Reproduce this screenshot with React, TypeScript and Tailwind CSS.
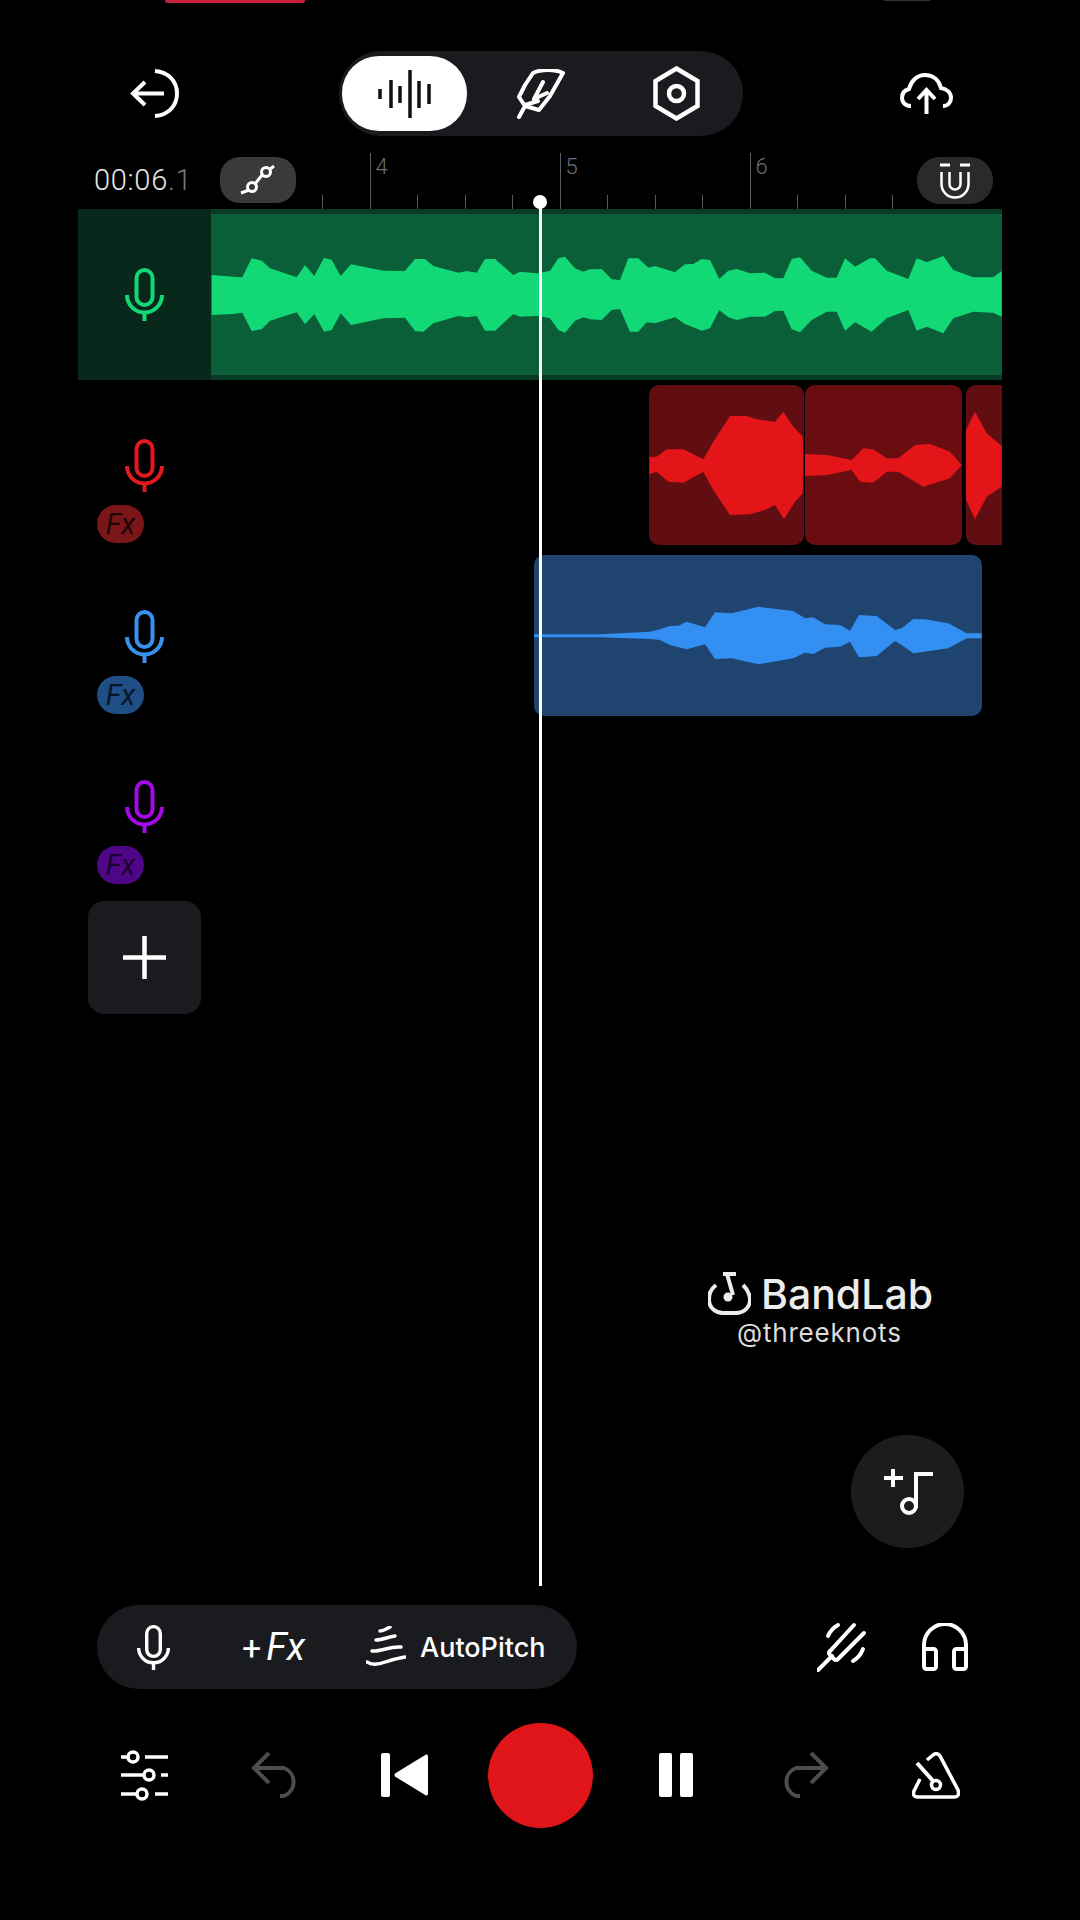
type Pt = [number, number];

const place = (pts: Pt[], ox: number, oy: number) =>
  pts.map(([x, y]) => `${(ox + x / 3).toFixed(1)},${(oy + y / 3).toFixed(1)}`).join(' ');

// waveform outlines, traced by eye
const greenA: Pt[] = [[425,225],[490,230],[517,232],[545,175],[575,182],[600,205],[680,232],[705,195],[733,228],[762,173],[785,180],[812,228],[843,193],[940,212],[1005,213],[1035,177],[1065,177],[1090,198],[1165,218],[1190,213],[1220,218],[1245,177],[1275,177],[1330,225],[1350,215],[1400,220]];
const greenB: Pt[] = [[55,220],[90,212],[115,175],[135,170],[165,205],[190,215],[210,208],[245,207],[275,238],[300,240],[325,175],[355,175],[385,203],[405,198],[465,217],[495,193],[520,192],[545,177],[570,180],[598,237],[625,212],[650,207],[690,220],[735,218],[765,235],[790,235],[815,177],[840,172],[875,212],[920,233],[950,233],[975,175],[1005,200],[1050,175],[1065,175],[1100,212],[1165,237],[1190,175],[1220,187],[1270,168],[1300,210],[1360,232],[1420,232],[1445,213],
  [1445,350],[1420,338],[1360,335],[1300,355],[1270,400],[1220,380],[1190,392],[1165,330],[1100,355],[1055,395],[1005,367],[975,392],[950,335],[920,335],[875,360],[840,397],[815,388],[790,332],[765,333],[735,350],[690,350],[650,360],[625,352],[598,330],[570,385],[545,392],[495,372],[465,352],[405,370],[380,367],[355,395],[330,395],[300,327],[275,330],[245,360],[210,358],[190,352],[165,362],[135,398],[115,390],[90,355],[55,348]];
const greenC: Pt[] = [[1400,348],[1350,350],[1330,342],[1275,392],[1245,392],[1220,348],[1190,352],[1165,348],[1090,370],[1060,395],[1035,393],[1005,353],[940,355],[843,375],[812,340],[785,390],[762,395],[733,342],[705,373],[680,337],[600,362],[575,388],[545,393],[517,338],[490,342],[425,345]];

const red1: Pt[] = [[388,772],[410,770],[440,748],[490,748],[550,778],[580,725],[630,648],[680,648],[710,658],[765,665],[790,635],[820,680],[848,710],[850,795],[848,880],[825,905],[792,958],[765,915],[735,930],[690,943],[630,945],[580,870],[550,815],[490,848],[445,845],[410,815],[388,823]];
const red2: Pt[] = [[855,762],[920,765],[995,780],[1030,745],[1060,748],[1100,775],[1135,775],[1185,735],[1230,732],[1290,755],[1325,795],[1290,835],[1210,860],[1135,815],[1100,815],[1060,848],[1020,845],[995,810],[920,825],[855,828]];
const red3: Pt[] = [[1338,690],[1365,635],[1400,700],[1445,738],[1445,860],[1400,890],[1365,958],[1338,900]];
const blue: Pt[] = [[42,283],[240,283],[390,275],[420,268],[450,258],[475,257],[500,245],[555,262],[585,217],[635,220],[715,200],[820,213],[855,235],[880,232],[915,253],[960,255],[990,272],[1017,225],[1070,228],[1125,270],[1145,265],[1180,237],[1215,238],[1285,250],[1340,280],[1385,280],[1385,295],[1340,295],[1285,325],[1180,340],[1145,315],[1125,303],[1070,348],[1017,352],[990,305],[960,320],[915,323],[880,342],[855,338],[820,355],[715,373],[635,355],[585,357],[555,313],[500,328],[450,315],[420,300],[390,297],[240,292],[42,292]];

function Mic({ className }: { className: string }) {
  return (
    <svg viewBox="0 0 39 53" className={`w-[39px] h-[53px] ${className}`} fill="none" stroke="currentColor" strokeWidth="4">
      <rect x="11.5" y="2" width="16" height="35" rx="8" />
      <path d="M2 27a17.5 17.5 0 0 0 35 0" />
      <path d="M19.5 45v8" />
    </svg>
  );
}

function Fx({ className }: { className: string }) {
  return (
    <div className={`w-[47px] h-[38px] ml-[19px] mt-[13px] rounded-[19px] flex items-center justify-center text-[29px] italic leading-none font-['Roboto',sans-serif] ${className}`}>
      Fx
    </div>
  );
}

function TrackHead({ mic, fx }: { mic: string; fx: string }) {
  return (
    <div className="w-[133px] shrink-0 flex flex-col">
      <Mic className={`ml-[47px] ${mic}`} />
      <Fx className={fx} />
    </div>
  );
}

function Tick({ label }: { label?: string }) {
  if (label) {
    return (
      <div className="w-[47.5px] h-[56px] border-l border-[#5c5c60] pl-[5px] pt-[3px] text-[22px] leading-none text-[#6d6d78] font-['Roboto',sans-serif] font-light">
        {label}
      </div>
    );
  }
  return <div className="w-[47.5px] h-[14px] border-l border-[#58585c]" />;
}

export default function App() {
  return (
    <div className="relative w-[1080px] h-[1920px] bg-black overflow-hidden flex flex-col font-['Roboto',sans-serif] text-white">
      {/* cut off bits of the status bar */}
      <div className="h-[3px] flex">
        <div className="ml-[165px] w-[140px] bg-[#c8203f] rounded-b-[3px]" />
        <div className="ml-[579px] w-[46px] h-[1px] bg-[#333]" />
      </div>

      {/* top bar */}
      <div className="mt-[48px] h-[85px] flex items-center">
        <svg viewBox="0 0 50 50" className="ml-[130px] w-[50px] h-[50px] text-white" fill="none" stroke="currentColor" strokeWidth="4">
          <path d="M25 2C38 3 47 12 47 24.5C47 37 38 46 25 47" />
          <path d="M4 24.5H34M15 13L3 24.5L15 36" />
        </svg>
        <div className="ml-[159px] w-[404px] h-[85px] rounded-[42px] bg-[#1a1b1e] flex items-center">
          <div className="ml-[3px] w-[125px] h-[75px] rounded-[37px] bg-white flex items-center justify-center">
            <svg viewBox="0 0 60 50" className="w-[60px] h-[50px]" fill="none" stroke="#111" strokeWidth="3.5">
              <path d="M5 20v10M16 11v28M25 17v17M35 1v48M44 12v27M54 15v20" />
            </svg>
          </div>
          <svg viewBox="0 0 48 50" className="ml-[50px] w-[48px] h-[50px]" fill="none" stroke="white" strokeWidth="4" strokeLinejoin="round" strokeLinecap="round">
            <path d="M46 4C38 0 24 0 16 4L8 16L2 28L8 37L22 41L33 27Z" />
            <path d="M2 48L8 37M26 13L17 30L30 24M8 36L21 32" />
          </svg>
          <svg viewBox="0 0 47 55" className="ml-[88px] w-[47px] h-[55px]" fill="none" stroke="white" strokeWidth="4.5">
            <path d="M23.5 2.5L44.5 15V40L23.5 52.5L2.5 40V15Z" />
            <circle cx="23.5" cy="27.5" r="7.5" />
          </svg>
        </div>
        <svg viewBox="0 0 53 41" className="ml-[157px] w-[53px] h-[41px]" fill="none" stroke="white" strokeWidth="4">
          <path d="M11 33C5 33 2 29 2 25C2 20 5 17 9 16C11 8 17 2 25 2C33 2 39 7 41 15C47 16 51 20 51 25C51 29 48 33 43 33" />
          <path d="M26.5 41V18M18 26L26.5 17L35 26" />
        </svg>
      </div>

      {/* ruler */}
      <div className="mt-[17px] h-[56px] flex items-start">
        <div className="ml-[94px] mt-[13px] w-[126px] text-[29px] leading-[28px] tracking-[0.7px] font-light text-[#e8e8e8] whitespace-nowrap">
          00:06<span className="text-[#77777c]">.1</span>
        </div>
        <div className="mt-[4px] w-[76px] h-[46px] rounded-[20px] bg-[#3a3a3c] flex items-center justify-center">
          <svg viewBox="0 0 36 30" className="w-[36px] h-[30px]" fill="none" stroke="white" strokeWidth="3">
            <path d="M34 1L29 5M22 10L15 19M9 25L1 28" />
            <circle cx="26" cy="7" r="4.5" />
            <circle cx="12" cy="22" r="4.5" />
          </svg>
        </div>
        <div className="ml-[26px] h-[56px] w-[595px] flex items-end">
          <Tick />
          <Tick label="4" />
          <Tick />
          <Tick />
          <Tick />
          <Tick label="5" />
          <Tick />
          <Tick />
          <Tick />
          <Tick label="6" />
          <Tick />
          <Tick />
          <div className="w-[25px] h-[14px] border-l border-[#58585c]" />
        </div>
        <div className="mt-[4px] w-[76px] h-[47px] rounded-[23px] bg-[#2a2a2c] flex items-center justify-center">
          <svg viewBox="0 0 30 36" className="w-[30px] h-[36px]" fill="none" stroke="white" strokeWidth="2.5">
            <path d="M0 2H10M20 2H30" strokeWidth="3" />
            <path d="M1.5 9V21A13.5 13.5 0 0 0 28.5 21V9" />
            <path d="M9.5 9V21A5.5 5.5 0 0 0 20.5 21V9" />
          </svg>
        </div>
      </div>

      {/* green track */}
      <div className="ml-[78px] w-[924px] h-[171px] flex bg-[#093c25]">
        <div className="w-[133px] bg-[#07281a] flex items-center justify-center">
          <Mic className="text-[#12d876] -mt-[1px]" />
        </div>
        <div className="my-[5px] flex-1 bg-[#0a5f38]">
          <svg viewBox="211 214 791 161" className="w-[791px] h-[161px]">
            <polygon fill="#12d876" points={`${place(greenA, 70, 200)} ${place(greenB, 520, 200)} ${place(greenC, 70, 200)}`} />
          </svg>
        </div>
      </div>

      {/* red track */}
      <div className="ml-[78px] w-[924px] h-[171px] flex overflow-hidden">
        <div className="pt-[59px]">
          <TrackHead mic="text-[#e3191d]" fx="bg-[#7a1518] text-[#220506]" />
        </div>
        <div className="ml-[438px] mt-[5px] flex h-[160px]">
          <div className="w-[155px] h-[160px] rounded-[10px] bg-[#600e11] shrink-0">
            <svg viewBox="649 385 155 160" className="w-[155px] h-[160px]">
              <polygon fill="#e31519" points={place(red1, 520, 200)} />
            </svg>
          </div>
          <div className="ml-[1px] w-[157px] h-[160px] rounded-[10px] bg-[#690d11] shrink-0">
            <svg viewBox="805 385 157 160" className="w-[157px] h-[160px]">
              <polygon fill="#e31519" points={place(red2, 520, 200)} />
            </svg>
          </div>
          <div className="ml-[4px] w-[36px] h-[160px] rounded-l-[10px] bg-[#600e11] shrink-0">
            <svg viewBox="966 385 36 160" className="w-[36px] h-[160px]">
              <polygon fill="#e31519" points={place(red3, 520, 200)} />
            </svg>
          </div>
        </div>
      </div>

      {/* blue track */}
      <div className="ml-[78px] w-[924px] h-[170px] flex">
        <div className="pt-[59px]">
          <TrackHead mic="text-[#3a90ee]" fx="bg-[#1f4f85] text-[#081726]" />
        </div>
        <div className="ml-[323px] mt-[4px] w-[448px] h-[161px] rounded-[10px] bg-[#1f4470]">
          <svg viewBox="534 555 448 161" className="w-[448px] h-[161px]">
            <polygon fill="#338ff2" points={place(blue, 520, 540)} />
          </svg>
        </div>
      </div>

      {/* purple track */}
      <div className="ml-[78px] h-[171px] pt-[59px]">
        <TrackHead mic="text-[#a30ae6]" fx="bg-[#4f0788] text-[#1c0232]" />
      </div>

      {/* add track */}
      <div className="ml-[88px] mt-[9px] w-[113px] h-[113px] rounded-[16px] bg-[#1a1b1e] flex items-center justify-center">
        <svg viewBox="0 0 43 43" className="w-[43px] h-[43px]" fill="none" stroke="white" strokeWidth="4.5">
          <path d="M21.5 0V43M0 21.5H43" />
        </svg>
      </div>

      {/* watermark */}
      <div className="ml-[708px] mt-[258px] h-[62px] w-[230px] flex flex-col text-[#ececec]">
        <div className="flex items-center h-[43px]">
          <svg viewBox="0 0 43 43" className="w-[43px] h-[43px] shrink-0" fill="none" stroke="currentColor" strokeWidth="4">
            <path d="M8 13C2 18 1 22 1 28C1 36 8 41 15 41H28C36 41 42 35 42 28C42 22 40 18 35 13" />
            <path d="M15 2H28M19 2L25 23" />
            <circle cx="20" cy="25" r="4.5" fill="currentColor" stroke="none" />
          </svg>
          <span className="ml-[10px] mt-[2px] text-[41px] leading-none font-['Inter',sans-serif] font-medium">BandLab</span>
        </div>
        <span className="ml-[29px] mt-[4px] text-[26px] leading-[28px] font-['Inter',sans-serif] tracking-[0.8px] text-[#dcdcdc] whitespace-nowrap">@threeknots</span>
      </div>

      {/* add loop */}
      <div className="ml-[851px] mt-[101px] w-[113px] h-[113px] rounded-full bg-[#1a1c1e] flex items-center justify-center">
        <svg viewBox="0 0 50 46" className="w-[50px] h-[46px]" fill="none" stroke="white" strokeWidth="4">
          <path d="M10 0V18M1 9H20" />
          <path d="M33 39V5H50" />
          <circle cx="26" cy="37" r="7" />
        </svg>
      </div>

      {/* record options */}
      <div className="mt-[57px] h-[84px] flex items-center">
        <div className="ml-[97px] w-[480px] h-[84px] rounded-[42px] bg-[#1a1b1e] flex items-center">
          <Mic className="ml-[37px] text-white scale-[0.85]" />
          <span className="ml-[69px] w-[66px] flex items-baseline text-[38px] leading-none font-normal text-white whitespace-nowrap">
            <span className="text-[34px] mr-[5px]">+</span><span className="italic">Fx</span>
          </span>
          <svg viewBox="0 0 40 42" className="ml-[58px] w-[40px] h-[42px]" fill="none" stroke="white" strokeWidth="3.5" strokeLinecap="round">
            <path d="M14 5C18 5 20 3 24 1" />
            <path d="M10 14C16 14 22 11 29 10" />
            <path d="M6 25C14 26 24 20 35 21" />
            <path d="M1 36C10 42 20 34 39 31" />
          </svg>
          <span className="ml-[14px] text-[27px] leading-none font-['Inter',sans-serif] font-medium whitespace-nowrap">AutoPitch</span>
        </div>
        <svg viewBox="0 0 50 50" className="ml-[240px] w-[50px] h-[50px]" fill="none" stroke="white" strokeWidth="4" strokeLinecap="round">
          <path d="M1 48L15 34" />
          <path d="M37 3L13 29Q11 31 13 33L17 37Q19 39 21 37L47 11" />
          <path d="M11 14Q14 7 21 3" />
          <path d="M36 39Q43 35 46 27" />
        </svg>
        <svg viewBox="0 0 46 48" className="ml-[55px] w-[46px] h-[48px]" fill="none" stroke="white" strokeWidth="4">
          <path d="M2 36V22A21 21 0 0 1 44 22V36" />
          <rect x="2" y="26" width="12" height="20" rx="2.5" />
          <rect x="32" y="26" width="12" height="20" rx="2.5" />
        </svg>
      </div>

      {/* transport */}
      <div className="mt-[34px] h-[104px] flex items-center">
        <svg viewBox="0 0 47 51" className="ml-[121px] w-[47px] h-[51px]" fill="none" stroke="white" strokeWidth="3.5">
          <path d="M0 7H7M24 7H47M0 25H22M40 25H47M0 44H16M34 44H47" />
          <circle cx="12" cy="7" r="5" />
          <circle cx="28" cy="25" r="5" />
          <circle cx="21" cy="44" r="5" />
        </svg>
        <svg viewBox="0 0 52 50" className="ml-[82px] w-[52px] h-[50px]" fill="none" stroke="#4d4d4d" strokeWidth="4">
          <path d="M19 3L4 18L19 33" />
          <path d="M4 18H34A15 15 0 0 1 34 46H30" />
        </svg>
        <div className="ml-[79px] w-[9px] h-[44px] rounded-[2px] bg-white" />
        <svg viewBox="0 0 34 44" className="ml-[4px] w-[34px] h-[44px]" fill="white">
          <path d="M32 1.5Q34 1 34 3.5V40.5Q34 43 32 42.5L1 23.5Q0 22 1 20.5Z" />
        </svg>
        <div className="ml-[60px] w-[105px] h-[105px] rounded-full bg-[#e01519]" />
        <div className="ml-[66px] w-[13px] h-[44px] rounded-[2px] bg-white" />
        <div className="ml-[8px] w-[13px] h-[44px] rounded-[2px] bg-white" />
        <svg viewBox="0 0 52 50" className="ml-[85px] w-[52px] h-[50px] -scale-x-100" fill="none" stroke="#4d4d4d" strokeWidth="4">
          <path d="M19 3L4 18L19 33" />
          <path d="M4 18H34A15 15 0 0 1 34 46H30" />
        </svg>
        <svg viewBox="0 0 48 47" className="ml-[82px] w-[48px] h-[47px]" fill="none" stroke="white" strokeWidth="3.5">
          <path d="M15 8L21 3Q25 0 28 4L46 38Q48 45 42 45H6Q0 45 2 39L8 27" />
          <path d="M5 11L22 30" strokeWidth="4" />
          <circle cx="24" cy="33" r="4.5" fill="black" />
        </svg>
      </div>

      {/* playhead */}
      <div className="absolute left-[539px] top-[204px] w-[3px] h-[1382px] bg-white" />
      <div className="absolute left-[533px] top-[195px] w-[14px] h-[14px] rounded-full bg-white" />
    </div>
  );
}
